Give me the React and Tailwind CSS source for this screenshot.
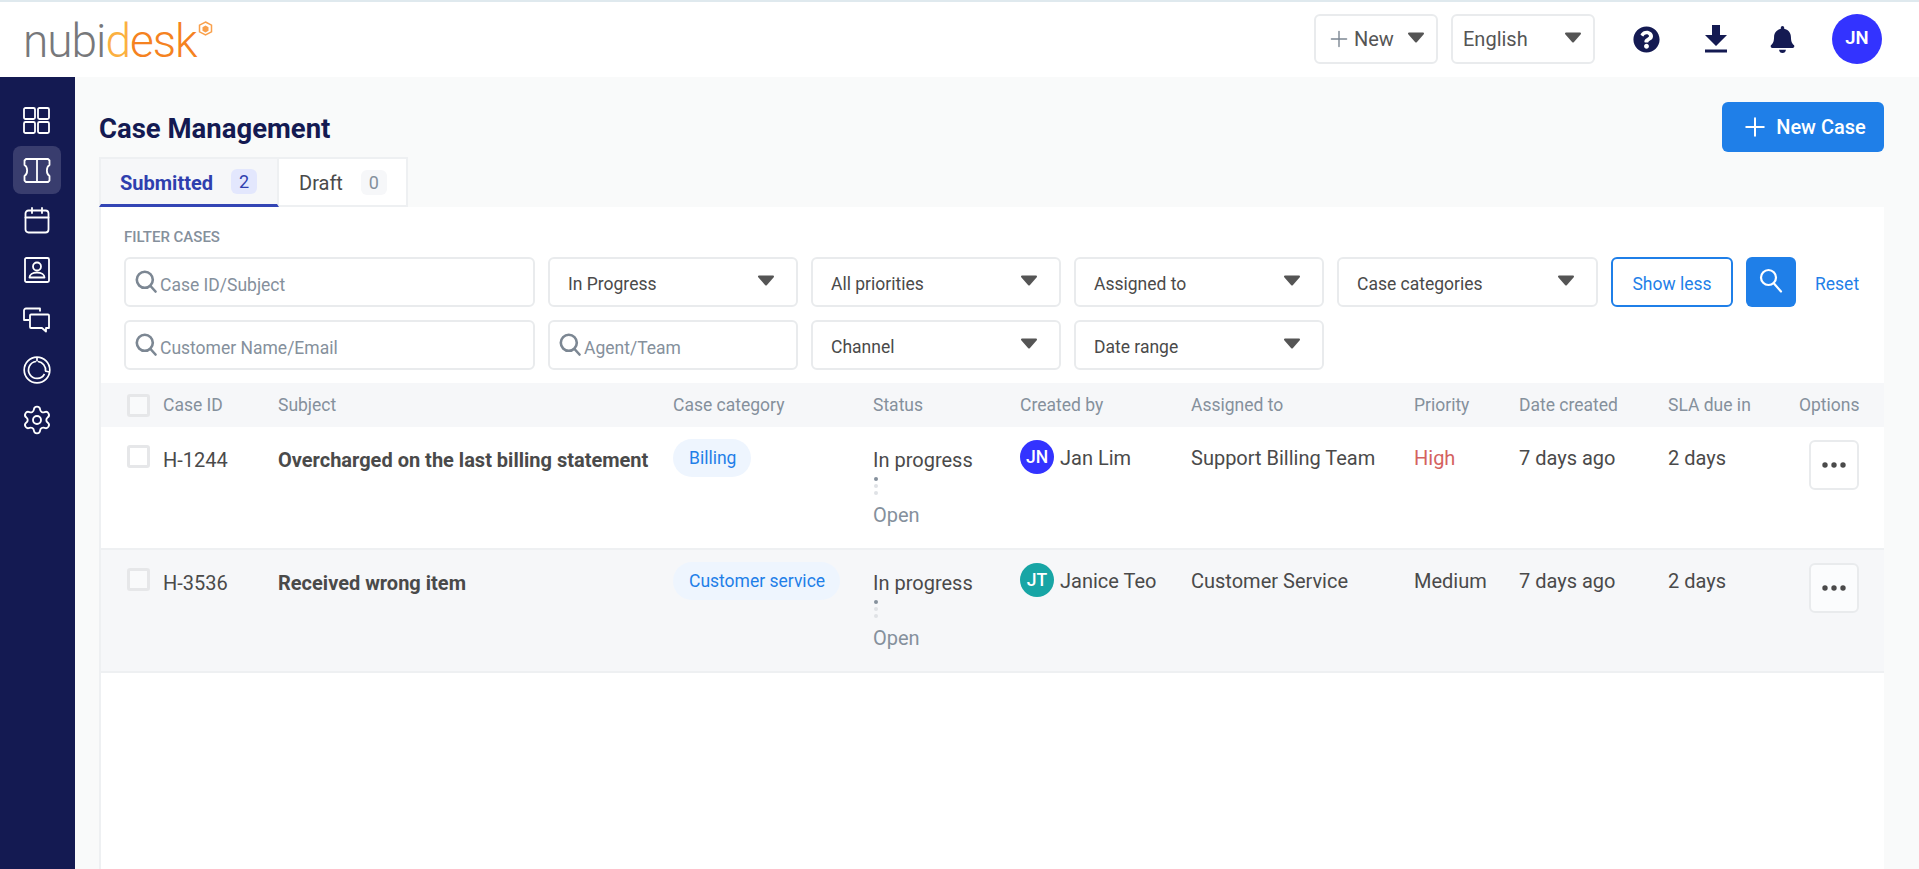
import React from "react";
import { Plus, Settings } from "lucide-react";
import { FaBell, FaQuestionCircle } from "react-icons/fa";

const rowCols = "grid grid-cols-[36px_115px_395px_200px_147px_171px_223px_105px_149px_131px_60px] pl-[26px]";

function Caret() {
  return (
    <svg width="18" height="11" viewBox="0 0 18 11" className="shrink-0">
      <path d="M2 1.5h14L9 9.5z" fill="#555" stroke="#555" strokeWidth="2" strokeLinejoin="round" />
    </svg>
  );
}

function SearchGlyph({ className }) {
  return (
    <svg width="22" height="23" viewBox="0 0 22 23" fill="none" stroke="currentColor" strokeWidth="2.6" className={className}>
      <circle cx="9.800" cy="9.800" r="8" />
      <path d="M15.500 16l5 5.500" strokeLinecap="round" />
    </svg>
  );
}

function Select({ label, className }) {
  return (
    <div className={`flex h-[50px] items-center justify-between rounded-md border-2 border-[#e9ebed] bg-white pl-[18px] pr-[21px] text-[17.5px] text-[#4a4a4a] ${className}`}>
      <span className="mt-[4px]">{label}</span>
      <span className="-mt-1"><Caret /></span>
    </div>
  );
}

function SearchInput({ label, className }) {
  return (
    <div className={`flex h-[50px] items-center gap-[3px] rounded-md border-2 border-[#e9ebed] bg-white pl-[9px] text-[17.5px] text-[#85909c] ${className}`}>
      <SearchGlyph className="-mt-[2px] text-[#7c8793]" />
      <span className="mt-[6px]">{label}</span>
    </div>
  );
}

function Checkbox() {
  return <div className="h-[23px] w-[23px] rounded-[3px] border-[3px] border-[#e6e7e9] bg-white/40" />;
}

function Logo() {
  return (
    <div className="flex items-start pl-[23px]">
      <div className="mt-[2px] font-['Roboto',sans-serif] text-[46px] leading-[62px] font-light tracking-[-1px]">
        <span className="text-[#77787b]">nubi</span>
        <span className="text-[#fbb040]">d</span>
        <span className="text-[#f58220]">esk</span>
      </div>
      <svg width="15" height="15" viewBox="0 0 15 15" className="mt-[13px] ml-[1px]">
        <path d="M7.500 1l6 3.200v6.600l-6 3.200-6-3.200V4.200z" fill="none" stroke="#f9a04b" strokeWidth="1.500" />
        <path d="M7.500 4.500l3 1.700v3.600l-3 1.700-3-1.700V6.200z" fill="#f9a04b" />
      </svg>
    </div>
  );
}

function Header() {
  return (
    <header className="flex h-[77px] shrink-0 items-center justify-between border-t-2 border-[#dfe9ee] bg-white pr-[37px]">
      <Logo />
      <div className="-mt-[1px] flex items-center">
        <div className="flex h-[50px] w-[124px] items-center justify-between rounded-md border-2 border-[#e9ebed] pl-[10px] pr-[11px] text-[20px] text-[#555]">
          <span className="flex items-center gap-[2px]">
            <Plus size={26} strokeWidth={1.300} className="text-[#7c8793]" />
            New
          </span>
          <span className="-mt-1"><Caret /></span>
        </div>
        <div className="ml-[13px] flex h-[50px] w-[144px] items-center justify-between rounded-md border-2 border-[#e9ebed] pl-[10px] pr-[11px] text-[20px] text-[#555]">
          <span>English</span>
          <span className="-mt-1"><Caret /></span>
        </div>
        <FaQuestionCircle size={27} className="ml-[38px] text-[#141a52]" />
        <svg width="24" height="28" viewBox="0 0 24 28" className="ml-[44px]">
          <path d="M8 0h8v10h7L12 21 1 10h7z" fill="#141a52" />
          <rect x="1" y="24.500" width="22" height="3" fill="#141a52" />
        </svg>
        <FaBell size={27} className="ml-[41px] text-[#141a52]" />
        <div className="ml-[36px] flex h-[50px] w-[50px] items-center justify-center rounded-full bg-[#3333ff] text-[18.5px] font-semibold text-white">
          JN
        </div>
      </div>
    </header>
  );
}

function SideSlot({ children, active }) {
  return (
    <div className="flex h-[50px] w-full items-center justify-center">
      {active ? <div className="flex h-[48px] w-[48px] items-center justify-center rounded-lg bg-[#393d6e]">{children}</div> : children}
    </div>
  );
}

function Sidebar() {
  return (
    <aside className="flex w-[75px] shrink-0 flex-col bg-[#141a52] pt-[18px] pr-[2px] text-white">
      <SideSlot>
        <svg width="27" height="27" viewBox="0 0 27 27" fill="none" stroke="currentColor" strokeWidth="1.800">
          <rect x="1" y="1" width="11" height="11" rx="1.500" />
          <rect x="15" y="1" width="11" height="11" rx="1.500" />
          <rect x="1" y="15" width="11" height="11" rx="1.500" />
          <rect x="15" y="15" width="11" height="11" rx="1.500" />
        </svg>
      </SideSlot>
      <SideSlot active>
        <svg width="28" height="25" viewBox="0 0 28 25" fill="none" stroke="currentColor" strokeWidth="1.800" strokeLinejoin="round">
          <path d="M3 1h22l1.500 1.500V7C23 9 23 16 26.500 18v4.500L25 24H3l-1.500-1.500V18C5 16 5 9 1.500 7V2.500z" />
          <path d="M14 1v23" />
        </svg>
      </SideSlot>
      <SideSlot>
        <svg width="26" height="27" viewBox="0 0 26 27" fill="none" stroke="currentColor" strokeWidth="1.800" strokeLinecap="round">
          <rect x="1.500" y="3.500" width="23" height="22" rx="3" />
          <path d="M1.500 10.500h23M8 1v5M18 1v5" />
        </svg>
      </SideSlot>
      <SideSlot>
        <svg width="26" height="26" viewBox="0 0 26 26" fill="none" stroke="currentColor" strokeWidth="1.800">
          <rect x="1" y="1" width="24" height="24" rx="1.500" />
          <circle cx="13" cy="9.500" r="4" />
          <path d="M5.500 20.500c0-3 3-5 7.500-5s7.500 2 7.500 5z" strokeLinejoin="round" />
        </svg>
      </SideSlot>
      <SideSlot>
        <svg width="27" height="26" viewBox="0 0 27 26" fill="none" stroke="currentColor" strokeWidth="1.800" strokeLinejoin="round">
          <path d="M17 4.500V1.500H3a2 2 0 0 0-2 2v9.500h5" />
          <path d="M8 7.500h17a1 1 0 0 1 1 1v12.500h-3v3.500l-4-3.500H8a1 1 0 0 1-1-1V8.500a1 1 0 0 1 1-1z" />
        </svg>
      </SideSlot>
      <SideSlot>
        <svg width="28" height="28" viewBox="0 0 28 28" fill="none" stroke="currentColor" strokeWidth="1.700">
          <circle cx="14" cy="14" r="12.800" />
          <path d="M15 5.500a8.500 8.500 0 0 1 7.500 9.500" />
          <path d="M21.500 18a8.500 8.500 0 1 1-8.500-12.500" />
          <path d="M14 1.500v4M22 15l4.500 1" />
        </svg>
      </SideSlot>
      <SideSlot>
        <Settings size={32} strokeWidth={1.400} />
      </SideSlot>
    </aside>
  );
}

function Status() {
  return (
    <div className="flex flex-col">
      <span className="leading-[24px]">In progress</span>
      <div className="mt-[5px] flex flex-col gap-[3px] pl-[1px]">
        <span className="h-1 w-1 rounded-full bg-[#85909c]" />
        <span className="h-1 w-1 rounded-full bg-[#dfe2e6]" />
        <span className="h-1 w-1 rounded-full bg-[#dfe2e6]" />
      </div>
      <span className="mt-[8px] leading-[24px] text-[#85909c]">Open</span>
    </div>
  );
}

function CaseRow({ id, subject, category, avatar, avatarColor, name, team, priority, priorityColor, shaded }) {
  return (
    <div className={`${rowCols} h-[123px] border-b-2 border-[#eef0f2] pt-[11px] text-[20px] text-[#4a4a4a] ${shaded ? "bg-[#f6f7f9]" : "bg-white"}`}>
      <div className="pt-[7px]"><Checkbox /></div>
      <div className="pt-[10px] leading-[24px]">{id}</div>
      <div className="pt-[10px] leading-[24px] font-bold">{subject}</div>
      <div className="pt-[1px]">
        <span className="inline-flex h-[38px] items-center rounded-[19px] bg-[#eef5fe] pr-[15px] pl-[16px] text-[17.5px] text-[#1f7fe8]">{category}</span>
      </div>
      <div className="pt-[10px]"><Status /></div>
      <div className="flex items-start gap-[6px] pt-[2px]">
        <div className={`flex h-[34px] w-[34px] items-center justify-center rounded-full text-[17.5px] font-medium text-white ${avatarColor}`}>{avatar}</div>
        <span className="pt-[3px]">{name}</span>
      </div>
      <div className="pt-[8px] leading-[24px]">{team}</div>
      <div className={`pt-[8px] leading-[24px] ${priorityColor}`}>{priority}</div>
      <div className="pt-[8px] leading-[24px]">7 days ago</div>
      <div className="pt-[8px] leading-[24px]">2 days</div>
      <div className="pt-[2px] pl-[10px]">
        <div className="flex h-[50px] w-[50px] items-center justify-center rounded-md border-2 border-[#e9ebed] bg-white/60">
          <svg width="24" height="6" viewBox="0 0 24 6" fill="#4a4a4a">
            <circle cx="3" cy="3" r="2.700" />
            <circle cx="12" cy="3" r="2.700" />
            <circle cx="21" cy="3" r="2.700" />
          </svg>
        </div>
      </div>
    </div>
  );
}

export default function App() {
  return (
    <div className="flex h-[869px] flex-col overflow-hidden bg-[#f9fafa] font-['Roboto',sans-serif]">
      <Header />
      <div className="flex min-h-0 flex-1">
        <Sidebar />
        <main className="flex-1 pl-[24px] pr-[35px]">
          <div className="flex items-start justify-between pt-[25px]">
            <h1 className="pt-[9px] text-[27.5px] leading-[36px] font-bold text-[#141a52]">Case Management</h1>
            <button className="flex h-[50px] w-[162px] items-center justify-center gap-[6px] rounded-md bg-[#1f7fe8] text-[20px] font-medium text-white">
              <Plus size={30} strokeWidth={1.600} />
              New Case
            </button>
          </div>

          <div className="mt-[5px] flex h-[50px] items-stretch">
            <div className="flex w-[180px] items-center border-x-2 border-t-2 border-b-[3px] border-[#eef0f2] border-b-[#3345b5] bg-[#f6f7f9] pl-[19px] text-[20px] font-bold text-[#2f3fae]">
              <span className="pt-[2px]">Submitted</span>
              <span className="ml-[18px] flex h-[25px] w-[26px] items-center justify-center rounded-md bg-[#e3e7fd] text-[18px] font-normal">2</span>
            </div>
            <div className="flex w-[129px] items-center border-t-2 border-r-2 border-b-2 border-[#eef0f2] bg-white pl-[20px] text-[20px] text-[#4a4a4a]">
              <span className="pt-[2px]">Draft</span>
              <span className="ml-[18px] flex h-[25px] w-[26px] items-center justify-center rounded-md bg-[#f6f7f9] text-[18px] text-[#85909c]">0</span>
            </div>
          </div>

          <section className="h-[662px] border-l-2 border-[#eef0f2] bg-white">
            <div className="pt-[22px] pl-[23px] text-[15px] leading-[16px] font-medium text-[#85909c]">FILTER CASES</div>
            <div className="mt-[12px] flex gap-[13px] pl-[23px]">
              <SearchInput label="Case ID/Subject" className="w-[411px]" />
              <Select label="In Progress" className="w-[250px]" />
              <Select label="All priorities" className="w-[250px]" />
              <Select label="Assigned to" className="w-[250px]" />
              <Select label="Case categories" className="w-[261px]" />
              <button className="h-[50px] w-[122px] rounded-md border-2 border-[#1f7fe8] pt-[4px] text-[17.5px] text-[#1f7fe8]">Show less</button>
              <button className="flex h-[50px] w-[50px] items-center justify-center rounded-md bg-[#1f7fe8] text-white">
                <svg width="24" height="25" viewBox="0 0 24 25" fill="none" stroke="currentColor" strokeWidth="2.200" className="-mt-1">
                  <circle cx="9.500" cy="9.500" r="7.500" />
                  <path d="M15 15.500l7 8" strokeLinecap="round" />
                </svg>
              </button>
              <span className="ml-[6px] self-center pt-[4px] text-[17.5px] text-[#1f7fe8]">Reset</span>
            </div>
            <div className="mt-[13px] flex gap-[13px] pl-[23px]">
              <SearchInput label="Customer Name/Email" className="w-[411px]" />
              <SearchInput label="Agent/Team" className="w-[250px]" />
              <Select label="Channel" className="w-[250px]" />
              <Select label="Date range" className="w-[250px]" />
            </div>

            <div className={`${rowCols} mt-[13px] h-[44px] items-center bg-[#f6f7f9] text-[17.5px] text-[#85909c]`}>
              <Checkbox />
              <span>Case ID</span>
              <span>Subject</span>
              <span>Case category</span>
              <span>Status</span>
              <span>Created by</span>
              <span>Assigned to</span>
              <span>Priority</span>
              <span>Date created</span>
              <span>SLA due in</span>
              <span>Options</span>
            </div>

            <CaseRow
              id="H-1244"
              subject="Overcharged on the last billing statement"
              category="Billing"
              avatar="JN"
              avatarColor="bg-[#3333ff]"
              name="Jan Lim"
              team="Support Billing Team"
              priority="High"
              priorityColor="text-[#d4625f]"
            />
            <CaseRow
              id="H-3536"
              subject="Received wrong item"
              category="Customer service"
              avatar="JT"
              avatarColor="bg-[#17a5a5]"
              name="Janice Teo"
              team="Customer Service"
              priority="Medium"
              priorityColor="text-[#4a4a4a]"
              shaded
            />
          </section>
        </main>
      </div>
    </div>
  );
}
